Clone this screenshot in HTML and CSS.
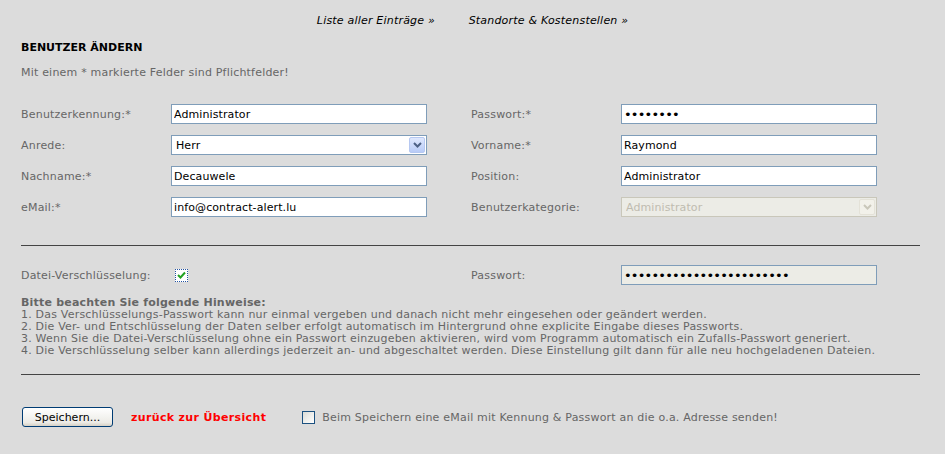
FILE: index.html
```html
<!DOCTYPE html>
<html lang="de">
<head>
    <meta charset="UTF-8">
    <title>Benutzer ändern</title>
    <link rel="stylesheet" href="styles.css">
</head>
<body>

<div class="topnav">
    <a href="#">Liste aller Einträge &raquo;</a>
    <a href="#">Standorte &amp; Kostenstellen &raquo;</a>
</div>

<div class="content">
    <h1>BENUTZER ÄNDERN</h1>
    <p class="note">Mit einem * markierte Felder sind Pflichtfelder!</p>

    <div class="form-grid">
        <label>Benutzerkennung:*</label>
        <input type="text" value="Administrator">
        <label>Passwort:*</label>
        <input type="password" value="12345678">

        <label>Anrede:</label>
        <div class="select-wrap">
            <select><option>Herr</option></select>
            <span class="select-arrow">
                <svg width="9" height="6" viewBox="0 0 9 6"><path d="M1 1 L4.5 4.5 L8 1" fill="none" stroke="#4d6185" stroke-width="2"/></svg>
            </span>
        </div>
        <label>Vorname:*</label>
        <input type="text" value="Raymond">

        <label>Nachname:*</label>
        <input type="text" value="Decauwele">
        <label>Position:</label>
        <input type="text" value="Administrator">

        <label>eMail:*</label>
        <input type="text" value="info@contract-alert.lu">
        <label>Benutzerkategorie:</label>
        <div class="select-wrap disabled">
            <select disabled><option>Administrator</option></select>
            <span class="select-arrow">
                <svg width="9" height="6" viewBox="0 0 9 6"><path d="M1 1 L4.5 4.5 L8 1" fill="none" stroke="#c9c7ba" stroke-width="2"/></svg>
            </span>
        </div>
    </div>

    <hr>

    <div class="form-grid">
        <label>Datei-Verschlüsselung:</label>
        <div><span class="check checked">
            <svg width="9" height="8" viewBox="0 0 9 8"><path d="M1 4 L3.5 6.5 L8 1.5" fill="none" stroke="#21a121" stroke-width="2"/></svg>
        </span></div>
        <label>Passwort:</label>
        <input type="password" class="locked" value="123456789012345678901234">
    </div>

    <div class="hints">
        <strong>Bitte beachten Sie folgende Hinweise:</strong><br>
        1. Das Verschlüsselungs-Passwort kann nur einmal vergeben und danach nicht mehr eingesehen oder geändert werden.<br>
        2. Die Ver- und Entschlüsselung der Daten selber erfolgt automatisch im Hintergrund ohne explicite Eingabe dieses Passworts.<br>
        3. Wenn Sie die Datei-Verschlüsselung ohne ein Passwort einzugeben aktivieren, wird vom Programm automatisch ein Zufalls-Passwort generiert.<br>
        4. Die Verschlüsselung selber kann allerdings jederzeit an- und abgeschaltet werden. Diese Einstellung gilt dann für alle neu hochgeladenen Dateien.
    </div>

    <hr class="bottom-rule">

    <div class="actions">
        <button class="save-btn">Speichern...</button>
        <a href="#" class="back-link">zurück zur Übersicht</a>
        <span class="check"></span>
        <span class="mail-note">Beim Speichern eine eMail mit Kennung &amp; Passwort an die o.a. Adresse senden!</span>
    </div>
</div>

</body>
</html>
```

FILE: styles.css
```css
body { background-color: #dcdcdc; color: #666; font-family: "DejaVu Sans", Verdana, sans-serif; font-size: 11px; line-height: 13px; letter-spacing: 0.2px; margin: 0; }
.topnav { text-align: center; padding-top: 14px; }
.topnav a { color: #000; font-style: italic; text-decoration: none; margin: 0 15px; }
.content { padding: 0 25px 0 21px; }
h1 { color: #000; font-size: 11px; font-weight: bold; letter-spacing: 0; margin: 14px 0 0; }
.note { margin: 12px 0 25px; }
.form-grid { display: grid; grid-template-columns: 150px 300px 150px 300px; row-gap: 11px; align-items: center; }
.form-grid input, .select-wrap { width: 256px; height: 20px; box-sizing: border-box; border: 1px solid #7f9db9; background: #fff; font-family: "DejaVu Sans", Verdana, sans-serif; font-size: 11px; letter-spacing: 0.1px; color: #000; padding: 0 2px; margin: 0; }
.form-grid input[type=password] { font-size: 13px; letter-spacing: -0.8px; }
.form-grid input.locked { background: #ecece6; }
.select-wrap { position: relative; padding: 0; }
.select-wrap select { appearance: none; border: none; background: transparent; width: 100%; height: 100%; font-family: "DejaVu Sans", Verdana, sans-serif; font-size: 11px; letter-spacing: 0.1px; color: #000; padding: 0 4px; margin: 0; outline: none; }
.select-arrow { position: absolute; right: 1px; top: 1px; width: 16px; height: 16px; box-sizing: border-box; border: 1px solid #b6c8f1; border-radius: 2px; background: linear-gradient(#dfe8fe, #b8cbf7); display: flex; align-items: center; justify-content: center; }
.select-wrap.disabled { background: #ecece6; border-color: #c9c7ba; }
.select-wrap.disabled select { color: #aca899; }
.select-wrap.disabled .select-arrow { background: #f2f1ea; border-color: #e4e2d8; }
hr { border: none; border-top: 1px solid #444; margin: 28px 0 19px; }
.check { display: inline-flex; align-items: center; justify-content: center; width: 13px; height: 13px; box-sizing: border-box; border: 1px solid #1c5180; background: linear-gradient(135deg, #dcdcd6, #fff); vertical-align: middle; }
.check.checked { border: 1px dotted #d57b1f; outline: 1px dotted #2554a3; outline-offset: -1px; background: #fff; margin-left: 4px; }
.hints { margin-top: 12px; line-height: 12px; }
.hints strong { letter-spacing: 0.2px; }
hr.bottom-rule { margin: 17px 0 32px; }
.actions { display: flex; align-items: center; }
.save-btn { width: 91px; height: 20px; border: 1px solid #003c74; border-radius: 3px; background: linear-gradient(#fff, #ecebe6 80%, #d6d0c5); font-family: "DejaVu Sans", Verdana, sans-serif; font-size: 11px; color: #000; padding: 0; margin-left: 1px; }
.back-link { color: #f00; font-weight: bold; text-decoration: none; letter-spacing: 0.35px; margin: 0 36px 0 18px; }
.mail-note { margin-left: 7px; }
```
